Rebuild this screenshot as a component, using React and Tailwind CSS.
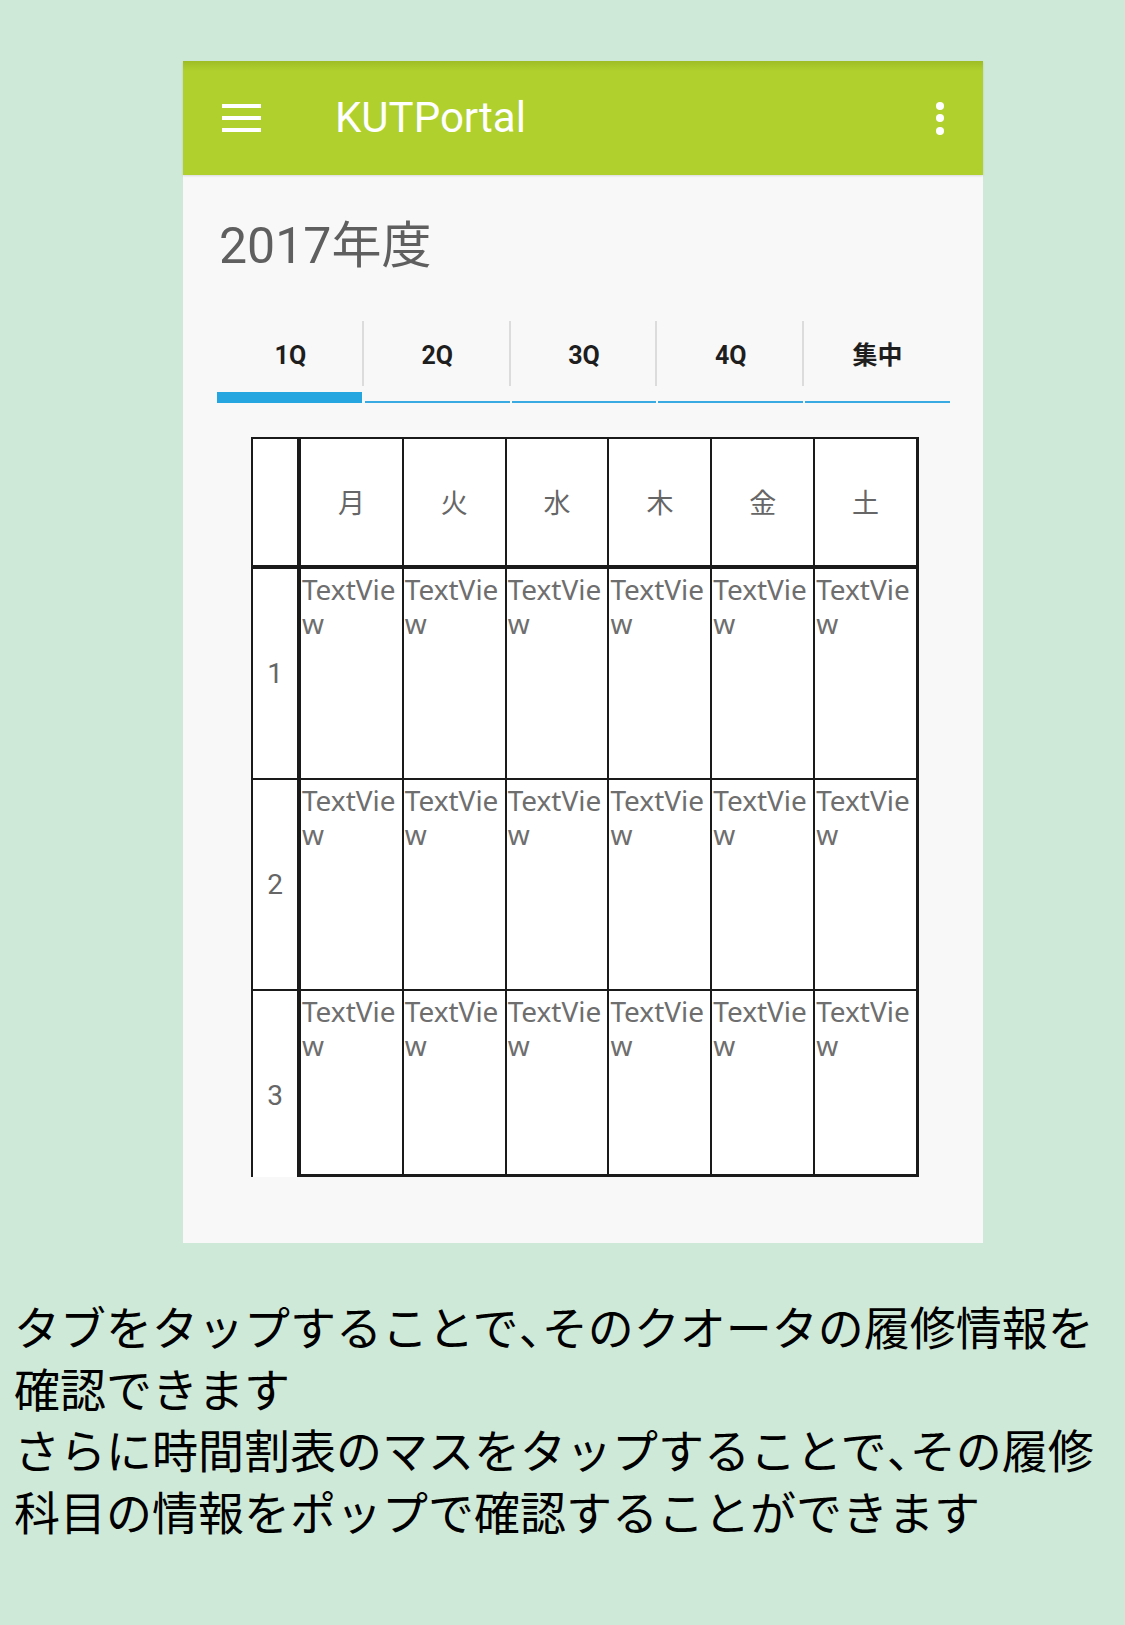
import React from "react";

const days = ["月", "火", "水", "木", "金", "土"];
const tabs = ["1Q", "2Q", "3Q", "4Q", "集中"];

function Cell({ last, bottom }) {
  return (
    <div
      className={
        "flex-1 min-w-0 pt-[3px] pl-[1px] bg-white font-['Noto_Sans','Noto_Sans_CJK_JP',sans-serif] text-[28px] leading-[34px] text-[#6e6e6e] break-all " +
        (last ? "" : "border-r-2 border-[#1a1a1a] ") +
        (bottom ? "border-b-[3px] border-[#1a1a1a]" : "")
      }
    >
      TextView
    </div>
  );
}

function Row({ label, third }) {
  return (
    <div
      className={
        third
          ? "flex h-[186px]"
          : "flex h-[211px] border-b-2 border-[#1a1a1a]"
      }
    >
      <div
        className={
          "w-[48px] shrink-0 border-r-4 border-[#1a1a1a] bg-white flex items-center justify-center font-['Roboto',sans-serif] text-[28px] text-[#666666] " +
          (third ? "pt-[24px]" : "")
        }
      >
        {label}
      </div>
      {days.map((d, i) => (
        <Cell key={d} last={i === 5} bottom={third} />
      ))}
    </div>
  );
}

export default function App() {
  return (
    <div className="w-[1125px] min-h-[1625px] bg-[#cfe9d8] pt-[61px] overflow-hidden">
      {/* phone frame */}
      <div className="ml-[183px] w-[800px] h-[1182px] bg-[#f8f8f8] flex flex-col">
        {/* app bar */}
        <div className="h-[114px] shrink-0 flex items-center bg-[linear-gradient(to_bottom,#9ebd25_0px,#b0d02d_10px,#b0d02d_100%)] shadow-[0_1px_2px_rgba(0,0,0,0.12)]">
          <div className="ml-[39px] w-[39px] flex flex-col gap-[8px]">
            <div className="h-[4px] bg-white" />
            <div className="h-[4px] bg-white" />
            <div className="h-[4px] bg-white" />
          </div>
          <div className="ml-[74px] font-['Roboto',sans-serif] text-[42px] text-white leading-none">
            KUTPortal
          </div>
          <div className="flex-1" />
          <div className="mr-[39px] w-[8px] flex flex-col gap-[4.5px]">
            <div className="w-[8px] h-[8px] rounded-full bg-white" />
            <div className="w-[8px] h-[8px] rounded-full bg-white" />
            <div className="w-[8px] h-[8px] rounded-full bg-white" />
          </div>
        </div>

        {/* title */}
        <div className="mt-[46px] ml-[36px] font-['Roboto','Noto_Sans_CJK_JP',sans-serif] text-[50px] leading-[50px] text-[#5f5f5f]">
          2017年度
        </div>

        {/* tabs */}
        <div className="mt-[42px] ml-[34px] w-[734px] h-[90px] flex">
          {tabs.map((t, i) => (
            <div
              key={t}
              className="relative flex-1 flex items-center justify-center pb-[4px] font-['Roboto','Noto_Sans_CJK_JP',sans-serif] font-bold text-[25px] text-[#1e1e1e]"
            >
              {t}
              {i < 4 && (
                <div className="absolute right-0 top-[8px] h-[65px] w-[2px] bg-[#dcdcdc]" />
              )}
              {i === 0 ? (
                <div className="absolute left-0 right-[2px] bottom-0 h-[11px] bg-[#26a6e1]" />
              ) : (
                <div className="absolute left-[1px] right-[1px] bottom-0 h-[2.5px] bg-[#3aaae2]" />
              )}
            </div>
          ))}
        </div>

        {/* table */}
        <div className="mt-[34px] ml-[68px] w-[668px] border-l-2 border-t-2 border-r-[3px] border-[#1a1a1a] bg-white">
          <div className="flex h-[130px] border-b-4 border-[#1a1a1a]">
            <div className="w-[48px] shrink-0 border-r-4 border-[#1a1a1a]" />
            {days.map((d, i) => (
              <div
                key={d}
                className={
                  "flex-1 min-w-0 flex items-center justify-center font-['Noto_Sans_CJK_JP',sans-serif] text-[27px] text-[#666666] " +
                  (i < 5 ? "border-r-2 border-[#1a1a1a]" : "")
                }
              >
                {d}
              </div>
            ))}
          </div>
          <Row label="1" />
          <Row label="2" />
          <Row label="3" third />
        </div>
      </div>

      {/* description */}
      <div className="mt-[52px] pl-[14px] whitespace-nowrap font-['Noto_Sans_CJK_JP',sans-serif] text-[46px] leading-[61.7px] text-black">
        タブをタップすることで<span className="tracking-[-0.5em]">、</span>そのクオータの履修情報を
        <br />
        確認できます
        <br />
        さらに時間割表のマスをタップすることで<span className="tracking-[-0.5em]">、</span>その履修
        <br />
        科目の情報をポップで確認することができます
      </div>
    </div>
  );
}
